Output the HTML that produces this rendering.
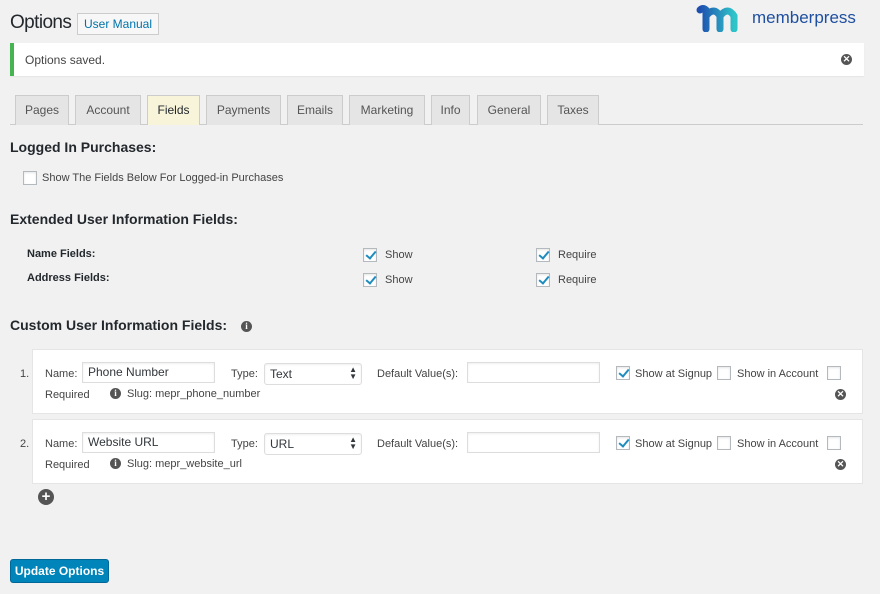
<!DOCTYPE html>
<html><head><meta charset="utf-8"><style>
*{box-sizing:border-box;margin:0;padding:0}
body{width:880px;height:594px;background:#f1f1f1;font-family:"Liberation Sans",sans-serif;color:#23282d;position:relative;overflow:hidden}
.a{position:absolute;white-space:nowrap}
.cb{position:absolute;width:14px;height:14px;background:#fff;border:1px solid #b4b9be;box-shadow:inset 0 1px 2px rgba(0,0,0,.1)}
.cb.on::after{content:"";position:absolute;left:4px;top:0px;width:4px;height:8px;border:solid #1e8cbe;border-width:0 2px 2px 0;transform:rotate(40deg)}
.tab{position:absolute;top:95px;height:30px;background:#e5e5e5;border:1px solid #ccc;border-bottom:none;font-size:12px;color:#555;text-align:center;line-height:29px}
.h{position:absolute;font-size:14px;font-weight:600;color:#23282d;white-space:nowrap}
.s{font-size:11px;color:#444}
.box{position:absolute;left:32px;width:831px;height:65px;background:#fff;border:1px solid #e5e5e5}
.in{position:absolute;background:#fff;border:1px solid #ddd;box-shadow:inset 0 1px 2px rgba(0,0,0,.07);height:21px;font-size:12px;padding:2px 5px;color:#32373c}
.x{position:absolute;width:11px;height:11px;border-radius:50%;background:#555;color:#fff;font-size:9px;line-height:11px;text-align:center;font-weight:bold}
.i{position:absolute;width:11px;height:11px;border-radius:50%;background:#555;color:#fff;font-size:9px;line-height:11px;text-align:center;font-weight:bold;font-family:"Liberation Serif",serif}
</style></head><body>
<div class="a" style="left:10px;top:12px;font-size:19px;letter-spacing:-0.6px;color:#23282d">Options</div>
<div class="a" style="left:77px;top:13px;width:82px;height:22px;border:1px solid #ccc;background:#f7f7f7;font-size:12px;color:#0073aa;text-align:center;line-height:20px">User Manual</div>
<svg class="a" style="left:696px;top:4px" width="50" height="28" viewBox="0 0 50 28">
<defs><linearGradient id="g" x1="0" x2="1"><stop offset="0" stop-color="#1e4fb0"/><stop offset="1" stop-color="#2ec4c8"/></linearGradient></defs>
<path d="M4 6 Q7 3 10 6 L10 25 M10 12 Q18 2 24 12 L24 25 M24 12 Q32 2 38 12 L38 25" stroke="url(#g)" stroke-width="7" fill="none" stroke-linecap="round"/>
</svg>
<div class="a" style="left:752px;top:8px;font-size:17px;color:#1e4fa0">memberpress</div>
<div class="a" style="left:10px;top:43px;width:854px;height:33px;background:#fff;border-left:4px solid #46b450;box-shadow:0 1px 1px rgba(0,0,0,.05)"></div>
<div class="a" style="left:25px;top:53px;font-size:12px;color:#444">Options saved.</div>
<div class="x" style="left:841px;top:54px">✕</div>
<div class="a" style="left:10px;top:124px;width:853px;height:1px;background:#ccc"></div>
<div class="tab" style="left:15px;width:54px">Pages</div>
<div class="tab" style="left:75px;width:66px">Account</div>
<div class="tab" style="left:147px;width:53px;background:#f7f4d9;color:#23282d">Fields</div>
<div class="tab" style="left:206px;width:75px">Payments</div>
<div class="tab" style="left:287px;width:56px">Emails</div>
<div class="tab" style="left:349px;width:76px">Marketing</div>
<div class="tab" style="left:431px;width:39px">Info</div>
<div class="tab" style="left:477px;width:64px">General</div>
<div class="tab" style="left:547px;width:52px">Taxes</div>
<div class="h" style="left:10px;top:139px">Logged In Purchases:</div>
<div class="cb" style="left:23px;top:171px"></div>
<div class="a s" style="left:42px;top:172px">Show The Fields Below For Logged-in Purchases</div>
<div class="h" style="left:10px;top:211px">Extended User Information Fields:</div>
<div class="a s" style="left:27px;top:248px;font-weight:bold;color:#23282d">Name Fields:</div>
<div class="a s" style="left:27px;top:272px;font-weight:bold;color:#23282d">Address Fields:</div>
<div class="cb on" style="left:363px;top:248px"></div><div class="a s" style="left:385px;top:249px">Show</div>
<div class="cb on" style="left:536px;top:248px"></div><div class="a s" style="left:558px;top:249px">Require</div>
<div class="cb on" style="left:363px;top:273px"></div><div class="a s" style="left:385px;top:274px">Show</div>
<div class="cb on" style="left:536px;top:273px"></div><div class="a s" style="left:558px;top:274px">Require</div>
<div class="h" style="left:10px;top:317px">Custom User Information Fields:</div>
<div class="i" style="left:241px;top:321px">i</div>

<div class="box" style="top:349px"></div>
<div class="a s" style="left:20px;top:368px">1.</div>
<div class="a s" style="left:45px;top:368px">Name:</div>
<div class="in" style="left:82px;top:362px;width:133px">Phone Number</div>
<div class="a s" style="left:231px;top:368px">Type:</div>
<div class="in" style="left:264px;top:363px;width:98px;height:22px;border-radius:3px;padding-top:3px">Text<span style="position:absolute;right:4px;top:2px;font-size:8px;line-height:7px">▲<br>▼</span></div>
<div class="a s" style="left:377px;top:368px">Default Value(s):</div>
<div class="in" style="left:467px;top:362px;width:133px"></div>
<div class="cb on" style="left:616px;top:366px"></div><div class="a s" style="left:635px;top:368px">Show at Signup</div>
<div class="cb" style="left:717px;top:366px"></div><div class="a s" style="left:737px;top:368px">Show in Account</div>
<div class="cb" style="left:827px;top:366px"></div>
<div class="a s" style="left:45px;top:389px">Required</div>
<div class="i" style="left:110px;top:388px">i</div>
<div class="a s" style="left:127px;top:388px">Slug: mepr_phone_number</div>
<div class="x" style="left:835px;top:389px">✕</div>

<div class="box" style="top:419px"></div>
<div class="a s" style="left:20px;top:438px">2.</div>
<div class="a s" style="left:45px;top:438px">Name:</div>
<div class="in" style="left:82px;top:432px;width:133px">Website URL</div>
<div class="a s" style="left:231px;top:438px">Type:</div>
<div class="in" style="left:264px;top:433px;width:98px;height:22px;border-radius:3px;padding-top:3px">URL<span style="position:absolute;right:4px;top:2px;font-size:8px;line-height:7px">▲<br>▼</span></div>
<div class="a s" style="left:377px;top:438px">Default Value(s):</div>
<div class="in" style="left:467px;top:432px;width:133px"></div>
<div class="cb on" style="left:616px;top:436px"></div><div class="a s" style="left:635px;top:438px">Show at Signup</div>
<div class="cb" style="left:717px;top:436px"></div><div class="a s" style="left:737px;top:438px">Show in Account</div>
<div class="cb" style="left:827px;top:436px"></div>
<div class="a s" style="left:45px;top:459px">Required</div>
<div class="i" style="left:110px;top:458px">i</div>
<div class="a s" style="left:127px;top:458px">Slug: mepr_website_url</div>
<div class="x" style="left:835px;top:459px">✕</div>

<div class="a" style="left:38px;top:489px;width:16px;height:16px;border-radius:50%;background:#555;color:#fff;font-size:15px;line-height:16px;text-align:center;font-weight:bold">+</div>
<div class="a" style="left:10px;top:559px;width:99px;height:24px;background:#0085ba;border:1px solid #006799;border-radius:3px;color:#fff;font-size:12px;font-weight:bold;text-align:center;line-height:22px">Update Options</div>
</body></html>
